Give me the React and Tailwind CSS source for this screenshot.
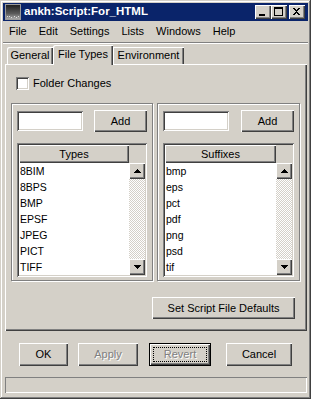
import React from 'react';

function Button({ label, className = '', disabled = false }) {
    return (
        <div className={`flex items-center justify-center bg-[#d4d0c8] shadow-[inset_1px_1px_#fff,inset_-1px_-1px_#404040,inset_-2px_-2px_#808080] ${className}`}>
            <span className={disabled ? 'text-[#808080] [text-shadow:1px_1px_0_#fff]' : ''}>{label}</span>
        </div>
    );
}

function TitleButton({ children }) {
    return (
        <div className="w-[16px] h-[14px] bg-[#d4d0c8] shadow-[inset_1px_1px_#fff,inset_-1px_-1px_#404040,inset_-2px_-2px_#808080]">
            <svg width="16" height="14" viewBox="0 0 16 14" shapeRendering="crispEdges">
                {children}
            </svg>
        </div>
    );
}

function ScrollArrow({ up }) {
    return (
        <div className="w-[16px] h-[16px] bg-[#d4d0c8] shadow-[inset_1px_1px_#fff,inset_-1px_-1px_#404040,inset_-2px_-2px_#808080]">
            <svg width="16" height="16" viewBox="0 0 16 16" shapeRendering="crispEdges">
                {up ? (
                    <path d="M8 6h1v1h1v1h1v1h1v1H5V9h1V8h1V7h1z" fill="#000" />
                ) : (
                    <path d="M5 6h7v1h-1v1h-1v1H9v1H8V9H7V8H6V7H5z" fill="#000" />
                )}
            </svg>
        </div>
    );
}

function ListBox({ title, items }) {
    return (
        <div className="mt-[11px] p-[2px] bg-white shadow-[inset_1px_1px_#808080,inset_-1px_-1px_#fff,inset_2px_2px_#404040,inset_-2px_-2px_#d4d0c8]">
            <div className="flex h-[18px] bg-[#d4d0c8]">
                <div className="flex-1 flex items-center justify-center shadow-[inset_1px_1px_#fff,inset_-1px_-1px_#404040,inset_-2px_-2px_#808080]">
                    {title}
                </div>
                <div className="w-[16px]" />
            </div>
            <div className="flex h-[112px]">
                <div className="flex-1 flex flex-col pl-[1px] text-[10.5px]">
                    {items.map((item) => (
                        <div key={item} className="h-[16px] leading-[16px]">{item}</div>
                    ))}
                </div>
                <div className="w-[16px] flex flex-col">
                    <ScrollArrow up />
                    <div className="flex-1 bg-[image:repeating-conic-gradient(#fff_0_25%,#d4d0c8_0_50%)] bg-[length:2px_2px]" />
                    <ScrollArrow />
                </div>
            </div>
        </div>
    );
}

function Group({ title, items, width }) {
    return (
        <div className={`${width} h-[178px] border border-[#808080] shadow-[inset_1px_1px_#fff,1px_1px_#fff] px-[5px] pt-[6px]`}>
            <div className="flex items-center h-[22px]">
                <div className="w-[66px] h-[20px] bg-white shadow-[inset_1px_1px_#808080,inset_-1px_-1px_#fff,inset_2px_2px_#404040,inset_-2px_-2px_#d4d0c8]" />
                <Button label="Add" className="ml-auto w-[53px] h-[22px]" />
            </div>
            <ListBox title={title} items={items} />
        </div>
    );
}

export default function App() {
    const menus = ['File', 'Edit', 'Settings', 'Lists', 'Windows', 'Help'];

    return (
        <div className="w-[311px] h-[399px] bg-[#d4d0c8] p-[3px] flex flex-col font-['Liberation_Sans',Arial,sans-serif] text-[11px] text-black shadow-[inset_-1px_-1px_#404040,inset_1px_1px_#d4d0c8,inset_-2px_-2px_#808080,inset_2px_2px_#fff]">
            {/* title bar */}
            <div className="h-[18px] bg-[#0a246a] flex items-center pl-[2px] pr-[3px]">
                <svg width="16" height="16" viewBox="0 0 16 16" shapeRendering="crispEdges">
                    <defs>
                        <linearGradient id="ic" x1="0" y1="0" x2="0" y2="1">
                            <stop offset="0" stopColor="#1c1c1c" />
                            <stop offset="0.6" stopColor="#5a5a5a" />
                            <stop offset="1" stopColor="#b0b0b0" />
                        </linearGradient>
                    </defs>
                    <rect x="0.5" y="0.5" width="15" height="15" fill="url(#ic)" stroke="#9a9a9a" />
                    <path d="M2 12h1v1H2zM4 12h1v1H4zM6 13h1v1H6zM9 12h1v1H9zM11 13h1v1h-1zM13 12h1v1h-1z" fill="#e0e0e0" />
                </svg>
                <span className="ml-[3px] text-white font-bold text-[11.5px]">ankh:Script:For_HTML</span>
                <div className="ml-auto flex items-center">
                    <TitleButton>
                        <rect x="4" y="9" width="6" height="2" fill="#000" />
                    </TitleButton>
                    <TitleButton>
                        <path d="M3 2h9v9H3zM4 4v6h7V4z" fill="#000" fillRule="evenodd" />
                    </TitleButton>
                    <div className="ml-[2px]">
                        <TitleButton>
                            <path d="M4 3h2v1h1v1h1V4h1V3h2v1h-1v1H9v1H8v1h1v1h1v1h1v1H9V9H8V8H7v1H6v1H4V9h1V8h1V7h1V6H6V5H5V4H4z" fill="#000" />
                        </TitleButton>
                    </div>
                </div>
            </div>

            {/* menu */}
            <div className="mt-[1px] h-[19px] flex items-center">
                {menus.map((m) => (
                    <span key={m} className="px-[6px]">{m}</span>
                ))}
            </div>
            <div className="mt-[1px] h-[2px] border-t border-t-[#808080] border-b border-b-white" />

            {/* tabs */}
            <div className="mt-[1px] h-[19px] ml-[2px] pl-[2px] flex items-end">
                <div className="w-[46px] h-[17px] flex items-center justify-center rounded-tl-[2px] shadow-[inset_1px_1px_#fff,inset_-1px_0_#404040,inset_-2px_0_#808080]">
                    General
                </div>
                <div className="relative z-10 w-[60px] h-[20px] -mb-[1px] pb-[2px] flex items-center justify-center bg-[#d4d0c8] rounded-tl-[2px] shadow-[inset_1px_1px_#fff,inset_-1px_0_#404040,inset_-2px_0_#808080]">
                    File Types
                </div>
                <div className="w-[71px] h-[17px] flex items-center justify-center shadow-[inset_1px_1px_#fff,inset_-1px_0_#404040,inset_-2px_0_#808080]">
                    Environment
                </div>
            </div>

            {/* panel */}
            <div className="ml-[2px] w-[302px] h-[267px] pl-[6px] pt-[13px] flex flex-col shadow-[inset_1px_1px_#fff,inset_-1px_-1px_#404040,inset_-2px_-2px_#808080]">
                <div className="ml-[5px] h-[13px] flex items-center">
                    <div className="w-[13px] h-[13px] bg-white shadow-[inset_1px_1px_#808080,inset_-1px_-1px_#fff,inset_2px_2px_#404040,inset_-2px_-2px_#d4d0c8]" />
                    <span className="ml-[4px]">Folder Changes</span>
                </div>
                <div className="mt-[13px] flex gap-[4px]">
                    <Group width="w-[142px]" title="Types" items={['8BIM', '8BPS', 'BMP', 'EPSF', 'JPEG', 'PICT', 'TIFF']} />
                    <Group width="w-[143px]" title="Suffixes" items={['bmp', 'eps', 'pct', 'pdf', 'png', 'psd', 'tif']} />
                </div>
                <div className="mt-[16px] flex justify-end pr-[12px]">
                    <Button label="Set Script File Defaults" className="w-[143px] h-[22px]" />
                </div>
            </div>

            {/* dialog buttons */}
            <div className="mt-[12px] h-[23px] flex">
                <Button label="OK" className="ml-[16px] w-[49px] h-[23px]" />
                <Button label="Apply" disabled className="ml-[10px] w-[60px] h-[23px]" />
                <div className="ml-[11px] w-[62px] h-[23px] border border-black">
                    <div className="w-full h-full p-[3px] bg-[#d4d0c8] shadow-[inset_1px_1px_#fff,inset_-1px_-1px_#404040,inset_-2px_-2px_#808080]">
                        <div className="w-full h-full border border-dotted border-black flex items-center justify-center">
                            <span className="text-[#808080] [text-shadow:1px_1px_0_#fff]">Revert</span>
                        </div>
                    </div>
                </div>
                <Button label="Cancel" className="ml-[15px] w-[66px] h-[23px]" />
            </div>

            {/* status bar */}
            <div className="mt-[11px] ml-[2px] w-[302px] h-[16px] shadow-[inset_1px_1px_#808080,inset_-1px_-1px_#fff]" />
        </div>
    );
}
